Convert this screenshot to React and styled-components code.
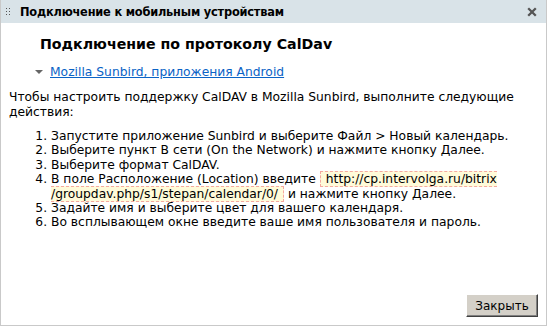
import React from 'react'
import styled, { createGlobalStyle } from 'styled-components'

const GlobalStyle = createGlobalStyle`
html, body {
margin: 0;
padding: 0;
background: #ffffff;
}
`

const Window = styled.div`
width: 547px;
height: 326px;
box-sizing: border-box;
border: 1px solid #c9c9c9;
border-top: none;
display: flex;
flex-direction: column;
font-family: "DejaVu Sans", Verdana, sans-serif;
color: #000;
background: #fff;
`

const TitleBar = styled.div`
height: 23px;
flex: none;
background: #d9e3e8;
display: flex;
align-items: center;
padding: 0 9px 0 4px;
`

const Grip = styled.span`
width: 5px;
height: 9px;
margin-right: 10px;
background-image: radial-gradient(circle, #555 0.8px, transparent 0.9px);
background-size: 3px 3px;
`

const TitleText = styled.div`
flex: 1;
font-family: "DejaVu Sans", Tahoma, sans-serif;
font-weight: bold;
font-size: 11.4px;
letter-spacing: -0.2px;
color: #000;
`

const CloseBtn = styled.svg`
width: 10px;
height: 10px;
`

const Body = styled.div`
flex: 1;
padding: 13px 8px 0 8px;
font-size: 12.3px;
`

const Heading = styled.h3`
margin: 0 0 13px 31px;
font-size: 14.2px;
font-weight: bold;
`

const LinkRow = styled.div`
display: flex;
align-items: center;
margin-left: 26px;
margin-bottom: 11px;
`

const Arrow = styled.span`
width: 0;
height: 0;
border-left: 4px solid transparent;
border-right: 4px solid transparent;
border-top: 4px solid #666;
margin-right: 7px;
`

const Link = styled.a`
color: #0a63c6;
text-decoration: underline;
`

const Para = styled.p`
margin: 0 0 9px 0;
line-height: 15px;
`

const Steps = styled.ol`
margin: 0;
padding-left: 42px;
line-height: 14.4px;
`

const Code = styled.span`
background: #fffbd9;
border: 1px dashed #f5a8a0;
padding: 0 5px;
`

const Footer = styled.div`
display: flex;
justify-content: flex-end;
padding: 0 8px 8px 0;
`

const Button = styled.button`
width: 72px;
height: 23px;
background: #d4d0c8;
border: 1px solid;
border-color: #ffffff #404040 #404040 #ffffff;
box-shadow: inset -1px -1px 0 #808080;
font-family: "DejaVu Sans", Tahoma, sans-serif;
font-size: 12px;
color: #000;
padding: 0;
`

export default function App() {
  return (
    <>
      <GlobalStyle />
      <Window>
        <TitleBar>
          <Grip />
          <TitleText>Подключение к мобильным устройствам</TitleText>
          <CloseBtn viewBox="0 0 10 10">
            <path d="M1.2 1.2L8.8 8.8M8.8 1.2L1.2 8.8" stroke="#555" strokeWidth="2.3" />
          </CloseBtn>
        </TitleBar>
        <Body>
          <Heading>Подключение по протоколу CalDav</Heading>
          <LinkRow>
            <Arrow />
            <Link href="#">Mozilla Sunbird, приложения Android</Link>
          </LinkRow>
          <Para>
            Чтобы настроить поддержку CalDAV в Mozilla Sunbird, выполните следующие действия:
          </Para>
          <Steps>
            <li>Запустите приложение Sunbird и выберите Файл &gt; Новый календарь.</li>
            <li>Выберите пункт В сети (On the Network) и нажмите кнопку Далее.</li>
            <li>Выберите формат CalDAV.</li>
            <li>
              В поле Расположение (Location) введите{' '}
              <Code>http://cp.intervolga.ru/bitrix /groupdav.php/s1/stepan/calendar/0/</Code> и нажмите кнопку Далее.
            </li>
            <li>Задайте имя и выберите цвет для вашего календаря.</li>
            <li>Во всплывающем окне введите ваше имя пользователя и пароль.</li>
          </Steps>
        </Body>
        <Footer>
          <Button>Закрыть</Button>
        </Footer>
      </Window>
    </>
  )
}
